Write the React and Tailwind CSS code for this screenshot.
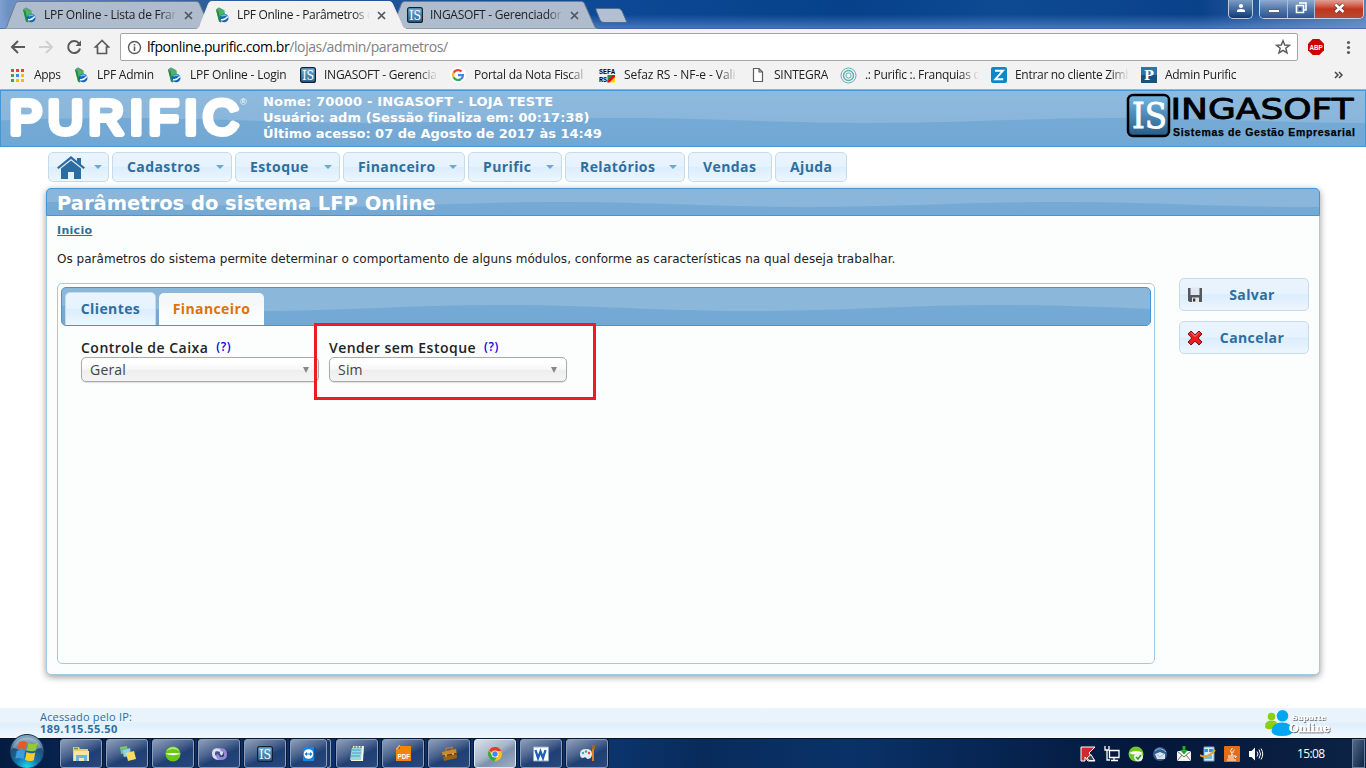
import React from "react";

const ui = "font-['Open_Sans','Noto_Sans',sans-serif]";
const verdana = "font-['DejaVu_Sans',sans-serif]";
const lucida = "font-['Open_Sans',sans-serif]";

/* Glossy wave used behind the blue bars */
function Wave({ peak, top, depth }) {
  let d = `M${peak - 1000} ${top}`;
  for (let x = peak - 1000; x < 1500; x += 500) {
    d += ` C${x + 90} ${top} ${x + 160} ${top + depth} ${x + 250} ${top + depth} S${x + 410} ${top} ${x + 500} ${top}`;
  }
  d += ` V100 H${peak - 1000}Z`;
  return (
    <svg className="absolute inset-0 h-full w-full" aria-hidden="true">
      <defs>
        <linearGradient id={`wave${peak}`} x1="0" y1="0" x2="0" y2="1">
          <stop offset="0" stopColor="#75aad5" />
          <stop offset="1" stopColor="#6ba3d1" />
        </linearGradient>
      </defs>
      <path d={d} fill={`url(#wave${peak})`} />
    </svg>
  );
}

function LpfIcon() {
  return (
    <svg width="16" height="16" viewBox="0 0 16 16" className="shrink-0">
      <path d="M2 2.500 5 0.500 10.500 3.500 11 8 7 15.500 5 14.500Z" fill="#4fb558" />
      <path d="M2 2.500 4.500 4 7 15.500 5 14.500Z" fill="#1f8a43" />
      <path d="M2 2.500 5 0.500 10.500 3.500 5 4Z" fill="#5f9d86" />
      <circle cx="10.200" cy="11" r="4.300" fill="#1466b4" />
      <path d="M7 12.500Q10.500 13.500 13.800 9.500" fill="none" stroke="#fff" strokeWidth="1.500" />
      <path d="M7.500 9Q10 7.500 12.500 8.500" fill="none" stroke="#5cc0ee" strokeWidth="1.600" />
    </svg>
  );
}

function IsIcon() {
  return (
    <svg width="16" height="16" viewBox="0 0 16 16" className="shrink-0">
      <defs>
        <linearGradient id="isg" x1="0" y1="0" x2="0" y2="1">
          <stop offset="0" stopColor="#6cb2dc" />
          <stop offset="1" stopColor="#2a618f" />
        </linearGradient>
      </defs>
      <rect x="0.6" y="0.6" width="14.8" height="14.8" rx="2" fill="url(#isg)" stroke="#14202b" strokeWidth="1.2" />
      <text x="2.2" y="12.6" fontSize="12.5" textLength="12" lengthAdjust="spacingAndGlyphs" fill="#fff" fontFamily="DejaVu Serif, serif">IS</text>
    </svg>
  );
}

function Tab({ active, icon, label, width, textClass }) {
  const w = width;
  return (
    <div className="relative -mr-[16px] h-[29px] shrink-0" style={{ width: w, zIndex: active ? 2 : 1 }}>
      <svg className="absolute inset-0" width={w} height="29">
        <path
          d={`M0 29 C3 28 3 26 4 23 L11 5 C12 2 13 1.5 16 1.5 H${w - 18} C${w - 15} 1.5 ${w - 14} 2 ${w - 13} 5 L${w - 5} 23 C${w - 3} 27 ${w - 3} 28.5 ${w} 29Z`}
          fill={active ? "#f2f2f2" : "#aebccd"}
          stroke={active ? "#f2f2f2" : "#6f7c90"}
          strokeWidth="1"
        />
      </svg>
      <div className="relative flex h-full items-center pl-[17px] pt-[1px]">
        {icon}
        <span className={`ml-[7px] block w-[133px] overflow-hidden whitespace-nowrap text-[12px] text-[#222] [mask-image:linear-gradient(to_right,black_88%,transparent)] ${textClass}`}>
          {label}
        </span>
        <svg width="9" height="9" viewBox="0 0 9 9" className="ml-[7px]">
          <path d="M1 1 8 8M8 1 1 8" stroke="#50565d" strokeWidth="1.7" />
        </svg>
      </div>
    </div>
  );
}

function TabStrip() {
  return (
    <div className="relative flex h-[29px] overflow-hidden bg-[linear-gradient(to_right,#7fa0cd_0px,#6d90c4_8px,#305f9e_200px,#0c4895_620px,#06418a_850px,#0d4a92_1000px,#0a428a_1200px,#5b80b6_1366px)] pl-[4px]">
      <div className="absolute inset-0 bg-[linear-gradient(to_bottom,transparent_50%,rgba(120,160,225,0.5)_95%,#3a5f99)]" />
      <Tab icon={<LpfIcon />} label="LPF Online - Lista de Fran" width={209} textClass="tracking-[-0.25px]" />
      <Tab active icon={<LpfIcon />} label="LPF Online - Parâmetros d" width={209} textClass="tracking-[-0.35px]" />
      <div className="flex w-[208px] shrink-0">
        <Tab icon={<IsIcon />} label="INGASOFT - Gerenciador" width={208} textClass="tracking-[-0.25px]" />
      </div>
      <svg width="36" height="18" className="relative mt-[7px] -ml-[5px] shrink-0">
        <path d="M3 1.5H25Q28 1.5 29 4L34 15.5H11Q8 15.5 7 13L3 3Z" fill="#b3c0d2" stroke="#4e6b97" />
      </svg>
      <div className="relative ml-auto flex shrink-0 gap-[6px] pr-[2px]">
        <div className="flex h-[19px] w-[25px] items-center justify-center rounded-b-[5px] border border-t-0 border-[#b7cbe6] bg-gradient-to-b from-[#7c9cc6] to-[#0b3a76] pb-[2px]">
          <svg width="10" height="10" viewBox="0 0 10 10">
            <circle cx="5" cy="3" r="2.1" fill="#fff" />
            <path d="M1 9V7.6Q1 6 5 6T9 7.6V9Z" fill="#fff" />
          </svg>
        </div>
        <div className="flex h-[19px] w-[105px] overflow-hidden rounded-b-[5px] border border-t-0 border-[#c2d2e8]">
          <div className="flex w-[28px] items-end justify-center border-r border-[#a8bedb] bg-gradient-to-b from-[#90abd0] via-[#5478ab] to-[#2b568f] pb-[5px]">
            <div className="h-[4px] w-[12px] border border-[#56657c] bg-white" />
          </div>
          <div className="flex w-[27px] items-center justify-center border-r border-[#a8bedb] bg-gradient-to-b from-[#90abd0] via-[#5478ab] to-[#2b568f] pb-[2px]">
            <svg width="12" height="12" viewBox="0 0 12 12">
              <path d="M4 1H11V8H9M1.500 3.500H8.500V10.500H1.500Z" fill="none" stroke="#fff" strokeWidth="1.600" />
              <path d="M4 6H6V8H4Z" fill="#33507c" />
            </svg>
          </div>
          <div className="flex flex-1 items-center justify-center bg-gradient-to-b from-[#e0a094] via-[#c2331d] to-[#b44a32] pb-[2px]">
            <svg width="13" height="11" viewBox="0 0 13 11">
              <path d="M2.5 1.5 10.5 9M10.5 1.5 2.5 9" stroke="#5a3a3a" strokeWidth="4" />
              <path d="M2.5 1.5 10.5 9M10.5 1.5 2.5 9" stroke="#fff" strokeWidth="2.6" />
            </svg>
          </div>
        </div>
      </div>
    </div>
  );
}

function Toolbar() {
  return (
    <div className="flex h-[33px] items-center bg-[#f2f2f2] pt-[3px]">
      <svg width="100" height="18" viewBox="0 0 100 18" className="ml-[10px] shrink-0" fill="none" stroke="#5a5a5a" strokeWidth="2">
        <path d="M15 9H2.5M8 3 2 9l6 6" />
        <path d="M29 9H41.500M36 3l6 6-6 6" stroke="#d0d0d0" />
        <path d="M69 5.500A6 6 0 1 0 70 10.500" />
        <path d="M71 2.500V8H65.500Z" fill="#5a5a5a" stroke="none" />
        <path d="M92 2.500 85.500 9H87.500V15.500H96.500V9H98.500Z" strokeWidth="1.7" />
      </svg>
      <div className="ml-[10px] flex h-[28px] w-[1178px] items-center rounded-[2px] border border-[#a6a6a6] bg-white px-[6px]">
        <svg width="15" height="15" viewBox="0 0 15 15" className="shrink-0">
          <circle cx="7.500" cy="7.500" r="6" fill="none" stroke="#5a5a5a" strokeWidth="1.4" />
          <path d="M7.500 6.500V11M7.500 4V5.500" stroke="#5a5a5a" strokeWidth="1.6" />
        </svg>
        <span className="ml-[5px] whitespace-nowrap pb-[1px] text-[14px] tracking-[-0.410px] text-black">
          lfponline.purific.com.br<span className="text-[#808080]">/lojas/admin/parametros/</span>
        </span>
        <svg width="16" height="16" viewBox="0 0 16 16" className="ml-auto">
          <path d="M8 1.700 9.700 6 14.400 6.300 10.800 9.300 12 13.900 8 11.300 4 13.900 5.200 9.300 1.600 6.300 6.300 6Z" fill="none" stroke="#5a5a5a" strokeWidth="1.400" />
        </svg>
      </div>
      <svg width="16" height="16" viewBox="0 0 16 16" className="ml-[10px]">
        <path d="M4.700 0H11.300L16 4.700V11.300L11.300 16H4.700L0 11.300V4.700Z" fill="#d00000" />
        <text x="1.400" y="10.700" fontSize="7.500" fontWeight="700" textLength="13.200" lengthAdjust="spacingAndGlyphs" fill="#fff" fontFamily="Liberation Sans, sans-serif">ABP</text>
      </svg>
      <svg width="5" height="15" viewBox="0 0 5 15" className="ml-[22px]" fill="#5a5a5a">
        <circle cx="2.500" cy="2.500" r="1.600" />
        <circle cx="2.500" cy="7.500" r="1.600" />
        <circle cx="2.500" cy="12.500" r="1.600" />
      </svg>
    </div>
  );
}

const icons = {
  apps: (
    <svg width="15" height="15" viewBox="0 0 15 15" className="shrink-0">
      <path d="M1 1h3v3H1ZM6 1h3v3H6ZM11 1h3v3h-3Z" fill="#ea4335" />
      <path d="M1 6h3v3H1Z" fill="#34a853" />
      <path d="M6 6h3v3H6Z" fill="#4285f4" />
      <path d="M11 6h3v3h-3Z" fill="#fbbc05" />
      <path d="M1 11h3v3H1Z" fill="#34a853" />
      <path d="M6 11h3v3H6ZM11 11h3v3h-3Z" fill="#fbbc05" />
    </svg>
  ),
  google: (
    <svg width="16" height="16" viewBox="0 0 16 16" className="shrink-0">
      <circle cx="8" cy="8" r="8" fill="#fff" />
      <g fill="none" strokeWidth="2.200">
        <path d="M3.600 5.700A5 5 0 0 1 11.500 4.500" stroke="#ea4335" />
        <path d="M3.600 5.700A5 5 0 0 0 3.600 10.300" stroke="#fbbc05" />
        <path d="M3.600 10.300A5 5 0 0 0 11 12" stroke="#34a853" />
        <path d="M11 12Q13 10.500 13 8.200H8" stroke="#4285f4" />
      </g>
    </svg>
  ),
  sefa: (
    <svg width="17" height="16" viewBox="0 0 17 16" className="shrink-0" fontFamily="Liberation Mono, monospace" fontWeight="700" fontSize="8">
      <text x="0" y="6.500" textLength="16" lengthAdjust="spacingAndGlyphs">SEFA</text>
      <text x="0" y="14.700" textLength="8" lengthAdjust="spacingAndGlyphs">RS</text>
      <path d="M8.500 8V15.500L16 8Z" fill="#16934a" />
      <path d="M16 15.500H8.500L16 8Z" fill="#ffd800" />
      <path d="M8.500 13.500 14 8H16V10L10.500 15.500H8.500Z" fill="#e01010" />
    </svg>
  ),
  page: (
    <svg width="16" height="16" viewBox="0 0 16 16" className="shrink-0">
      <path d="M3.500 1.500H9L12.500 5V14.500H3.500ZM9 1.500V5H12.500" fill="#fff" stroke="#5c5c5c" strokeWidth="1.200" />
    </svg>
  ),
  rings: (
    <svg width="17" height="17" viewBox="0 0 17 17" className="shrink-0" fill="none" stroke="#5cb3b4">
      <circle cx="8.500" cy="8.500" r="7.500" />
      <circle cx="8.500" cy="8.500" r="5" strokeWidth="1.400" />
      <circle cx="8.500" cy="8.500" r="2.600" />
    </svg>
  ),
  zimbra: (
    <svg width="16" height="16" viewBox="0 0 16 16" className="shrink-0">
      <rect width="16" height="16" rx="2" fill="#0a88c8" />
      <path d="M4 3.800H11.800L4.400 12.200H12.200" fill="none" stroke="#fff" strokeWidth="2" />
    </svg>
  ),
  purific: (
    <svg width="16" height="16" viewBox="0 0 16 16" className="shrink-0">
      <rect width="16" height="16" fill="#1b5079" />
      <path d="M0 0H16V8H0Z" fill="#2b76a8" />
      <text x="3" y="13" fontSize="13" fontWeight="700" fill="#fff" fontFamily="DejaVu Serif, serif">P</text>
    </svg>
  ),
};

const bookmarks = [
  ["w-[63px]", icons.apps, "Apps", "tracking-[-0.3px]"],
  ["w-[93px]", <LpfIcon />, "LPF Admin", "tracking-[-0.25px]"],
  ["w-[134px]", <LpfIcon />, "LPF Online - Login", "tracking-[-0.2px]"],
  ["w-[150px]", <IsIcon />, "INGASOFT - Gerencia", "tracking-[-0.25px]"],
  ["w-[149px]", icons.google, "Portal da Nota Fiscal", "tracking-[-0.25px]"],
  ["w-[151px]", icons.sefa, "Sefaz RS - NF-e - Vali", "tracking-[-0.05px]"],
  ["w-[90px]", icons.page, "SINTEGRA", "tracking-[-0.25px]"],
  ["w-[151px]", icons.rings, ".: Purific :. Franquias d", "tracking-[-0.3px]"],
  ["w-[150px]", icons.zimbra, "Entrar no cliente Zimb", "tracking-[-0.3px]"],
  ["w-[120px]", icons.purific, "Admin Purific", "tracking-[-0.28px]"],
];

function Bookmarks() {
  return (
    <div className="flex h-[28px] items-center border-b border-[#b0b0b0] bg-[#f2f2f2] pb-[1px] pl-[10px] text-[12px] text-[#222]">
      {bookmarks.map(([w, icon, label, tr], i) => (
        <div key={label} className={`flex shrink-0 items-center ${w}`}>
          {icon}
          <span
            className={`max-w-[114px] overflow-hidden whitespace-nowrap ${i === 0 ? "ml-[9px]" : "ml-[8px]"} [mask-image:linear-gradient(to_right,black_95px,transparent_114px)] ${tr}`}
          >
            {label}
          </span>
        </div>
      ))}
      <svg width="9" height="8" viewBox="0 0 9 8" className="ml-auto mr-[23px]" fill="none" stroke="#444" strokeWidth="1.500">
        <path d="M1 1 4 4 1 7M5 1 8 4 5 7" />
      </svg>
    </div>
  );
}

function SiteHeader() {
  return (
    <div className={`relative flex h-[57px] justify-between border border-[#4297d7] bg-gradient-to-b from-[#8fbade] to-[#84b2d7] ${verdana}`}>
      <Wave peak={120} top={27} depth={5} />
      <div className="relative flex">
        <svg width="262" height="55" viewBox="0 0 262 55">
          <text x="8.500" y="42.500" fontSize="49" textLength="229" lengthAdjust="spacing" fill="#fff" stroke="#fff" strokeWidth="6" strokeLinejoin="round" fontFamily="Liberation Sans, sans-serif">PURIFIC</text>
          <text x="239" y="13.500" fontSize="9" fill="#fff" fontFamily="Liberation Sans, sans-serif">®</text>
        </svg>
        <div className="pt-[3px] text-[13px] font-bold leading-[16px] text-white">
          <p className="tracking-[0.190px]">Nome: 70000 - INGASOFT - LOJA TESTE</p>
          <p className="tracking-[0.050px]">Usuário: adm (Sessão finaliza em: 00:17:38)</p>
          <p>Último acesso: 07 de Agosto de 2017 às 14:49</p>
        </div>
      </div>
      <svg width="230" height="50" viewBox="0 0 230 50" className="relative mr-[9px]">
        <defs>
          <linearGradient id="ilogo" x1="0" y1="0" x2="0" y2="1">
            <stop offset="0" stopColor="#74b7e3" />
            <stop offset="1" stopColor="#245c86" />
          </linearGradient>
        </defs>
        <rect x="2" y="4" width="41" height="41" rx="5" fill="url(#ilogo)" stroke="#000" strokeWidth="2.500" />
        <text x="6" y="37" fontSize="35" textLength="35" lengthAdjust="spacingAndGlyphs" fill="#fff" stroke="#fff" strokeWidth="0.900" fontFamily="DejaVu Serif, serif">IS</text>
        <text x="44.500" y="27.500" fontSize="29" textLength="183" lengthAdjust="spacingAndGlyphs" stroke="#000" strokeWidth="0.900" strokeLinejoin="round" fontFamily="DejaVu Sans, sans-serif">INGASOFT</text>
        <text x="47" y="45" fontSize="10.500" fontWeight="700" textLength="182" lengthAdjust="spacing" stroke="#000" strokeWidth="0.250" fontFamily="Liberation Sans, sans-serif">Sistemas de Gestão Empresarial</text>
      </svg>
    </div>
  );
}

const glass = "border border-[#c5dbec] bg-[linear-gradient(to_bottom,#e9f4fe_0%,#e6f2fd_48%,#dbedfc_52%,#edf6fe_100%)]";

const menu = [
  ["w-[120px]", "Cadastros", true],
  ["w-[105px]", "Estoque", true],
  ["w-[122px]", "Financeiro", true],
  ["w-[94px]", "Purific", true],
  ["w-[120px]", "Relatórios", true],
  ["w-[84px]", "Vendas", false],
  ["w-[72px]", "Ajuda", false],
];

const Caret = () => <span className="ml-auto border-x-[4px] border-t-[4px] border-x-transparent border-t-[#6da8d5]" />;

function Menu() {
  return (
    <div className="flex h-[41px] gap-[3px] pl-[48px] pt-[5px]">
      <div className={`flex h-[30px] w-[61px] items-center rounded-[5px] pl-[8px] pr-[6px] ${glass}`}>
        <svg width="28" height="23" viewBox="0 0 28 23" fill="#2c6da1">
          <path d="M0 11.500 14 0 20 5V2H24V8.300L28 11.500 26.500 13 14 3 1.500 13Z" />
          <path d="M4 12.500 14 4.500 24 12.500V23H17V16H11V23H4Z" />
        </svg>
        <Caret />
      </div>
      {menu.map(([w, label, drop]) => (
        <div key={label} className={`flex h-[30px] items-center rounded-[5px] pl-[14px] pr-[7px] ${w} ${glass} ${lucida}`}>
          <span className="pb-[2px] text-[14px] font-bold tracking-[0.400px] text-[#2e6e9e]">{label}</span>
          {drop && <Caret />}
        </div>
      ))}
    </div>
  );
}

function Field({ label, value }) {
  return (
    <div className="w-[238px]">
      <div className="flex h-[18px] items-center pb-[2px]">
        <span className={`whitespace-nowrap text-[14px] font-semibold tracking-[0.480px] text-[#222] ${lucida}`}>{label}</span>
        <span className={`ml-[8px] text-[12px] font-semibold tracking-[0.600px] text-[#0000f0] ${lucida}`}>(?)</span>
      </div>
      <div className="flex h-[25px] items-center rounded-[5px] border border-[#aaa] bg-[linear-gradient(to_bottom,#fff_20%,#f6f6f6_50%,#eee_52%,#f4f4f4_100%)] pl-[8px] pr-[9px] shadow-[0_1px_1px_rgba(0,0,0,0.12)]">
        <span className={`text-[14px] tracking-[0.200px] text-[#444] ${lucida}`}>{value}</span>
        <span className="ml-auto border-x-[3.500px] border-t-[6px] border-x-transparent border-t-[#888]" />
      </div>
    </div>
  );
}

function SideButton({ icon, label }) {
  return (
    <button className={`flex h-[33px] w-[130px] items-center rounded-[5px] pl-[7px] ${glass}`}>
      {icon}
      <span className={`flex-1 pr-[7px] text-center text-[14px] font-bold tracking-[0.400px] text-[#2e6e9e] ${lucida}`}>{label}</span>
    </button>
  );
}

function Panel() {
  return (
    <div className="mx-[46px] h-[487px] w-[1274px] overflow-visible rounded-[5px] border border-[#a6c9e2] bg-[#fcfefd] shadow-[0_2px_7px_rgba(0,0,0,0.4)]">
      <div className="relative -m-px flex h-[28px] items-center overflow-hidden rounded-t-[5px] border border-[#4297d7] bg-[#89b6da] pl-[10px] pt-[3px]">
        <Wave peak={514} top={13} depth={5} />
        <h1 className={`relative whitespace-nowrap text-[19.500px] font-bold text-white ${verdana}`}>Parâmetros do sistema LFP Online</h1>
      </div>
      <div className={`pl-[10px] pt-[8px] text-[#222] ${verdana}`}>
        <a className="block text-[11px] font-bold leading-[16px] tracking-[0.300px] text-[#2e6e9e] underline">Inicio</a>
        <p className="mt-[11px] whitespace-nowrap text-[12px] leading-[18px] tracking-[0.025px]">
          Os parâmetros do sistema permite determinar o comportamento de alguns módulos, conforme as características na qual deseja trabalhar.
        </p>
      </div>
      <div className="flex items-start justify-between pl-[10px] pr-[10px] pt-[10px]">
        <div className="mt-[5px] h-[381px] w-[1098px] rounded-[5px] border border-[#a6c9e2] p-[3px]">
          <div className="relative h-[39px] overflow-hidden rounded-[5px] border border-[#4297d7] bg-[#8bb7da]">
            <Wave peak={439} top={17} depth={6} />
            <div className={`relative flex gap-[3px] pl-[3px] pt-[4px] text-[14px] font-bold tracking-[0.400px] ${lucida}`}>
              <div className={`flex h-[34px] w-[91px] items-center justify-center rounded-t-[5px] pb-[2px] ${glass} text-[#2e6e9e]`}>Clientes</div>
              <div className="mt-px flex h-[34px] w-[105px] items-center justify-center rounded-t-[5px] bg-[linear-gradient(to_bottom,#f5f8f9_30%,#fcfefd_70%)] pb-[4px] text-[#e17009]">Financeiro</div>
            </div>
          </div>
          <div className="relative flex gap-[10px] pl-[20px] pt-[13px]">
            <Field label="Controle de Caixa" value="Geral" />
            <Field label="Vender sem Estoque" value="Sim" />
            <div className="absolute left-[253px] top-[-3px] h-[77px] w-[282px] border-[3px] border-[#ed1c24]" />
          </div>
        </div>
        <div className="flex flex-col gap-[10px]">
          <SideButton
            label="Salvar"
            icon={
              <svg width="16" height="16" viewBox="0 0 16 16">
                <path d="M1 1H15V15H2.500L1 13.500Z" fill="#55585c" />
                <path d="M3.500 0.500H12.500V8H3.500Z" fill="#dfe9ef" />
                <path d="M5 10.500H12V15H5Z" fill="#e5e5e5" />
                <path d="M6 11.500H8.300V14.500H6Z" fill="#333" />
              </svg>
            }
          />
          <SideButton
            label="Cancelar"
            icon={
              <svg width="16" height="16" viewBox="0 0 16 16">
                <path d="M4 1 8 4.800 12 1 15 4 11.200 8 15 12 12 15 8 11.200 4 15 1 12 4.800 8 1 4Z" fill="#ee1c1c" stroke="#6b1717" strokeLinejoin="round" />
                <path d="M4 2.500 8 6.500 12 2.500" fill="none" stroke="#ff8a80" />
              </svg>
            }
          />
        </div>
      </div>
    </div>
  );
}

function Footer() {
  return (
    <div className="mt-auto flex h-[30px] justify-between bg-[linear-gradient(to_bottom,#e9f4fd_0%,#e8f3fc_48%,#dfeffb_50%,#f0f7fe_100%)] pl-[40px] pr-[34px]">
      <div className={`pt-[3px] text-[11px] leading-[12px] text-[#2e6e9e] ${lucida}`}>
        <p className="tracking-[0.180px]">Acessado pelo IP:</p>
        <p className="font-bold tracking-[0.420px]">189.115.55.50</p>
      </div>
      <svg width="68" height="30" viewBox="0 0 68 30" fontFamily="DejaVu Serif, serif" fontWeight="700">
        <defs>
          <filter id="ts" x="-10%" y="-10%" width="130%" height="140%">
            <feDropShadow dx="0.800" dy="1" stdDeviation="0.500" floodColor="#555" floodOpacity="0.900" />
          </filter>
        </defs>
        <circle cx="7.500" cy="8.500" r="3.800" fill="#8ccf0a" />
        <path d="M1 18Q1 12.500 8 12.500Q12 12.500 13 15L8 21Q1 22 1 18Z" fill="#8ccf0a" />
        <circle cx="18.500" cy="7.800" r="5.800" fill="#00a7f0" />
        <path d="M7.500 23Q8 14.500 18 14.500T29 23Q28 28 18 28T7.500 23Z" fill="#00a7f0" />
        <g fill="#fff" filter="url(#ts)">
          <text x="28" y="12" fontSize="8" textLength="34" lengthAdjust="spacingAndGlyphs">Suporte</text>
          <text x="25" y="23.500" fontSize="10.500" textLength="41" lengthAdjust="spacingAndGlyphs" stroke="#fff" strokeWidth="0.400">Online</text>
        </g>
      </svg>
    </div>
  );
}

const taskIcons = [
  <svg width="18" height="16" viewBox="0 0 18 16"><path d="M1 1H7L8 3H16V15H1Z" fill="#eacb71" /><path d="M2 5H17V15H2Z" fill="#f7e7a6" /><path d="M4 9H15V15H12V12H7V15H4Z" fill="#68b6e4" /><path d="M2 2.500H6" stroke="#4aa83c" strokeWidth="1.500" /></svg>,
  <svg width="17" height="17" viewBox="0 0 17 17"><path d="M1 2 8 1 9 8 2 9Z" fill="#79c56c" /><path d="M3 5 11 3 12 11 5 12Z" fill="#8fd3f0" stroke="#5298c6" strokeWidth=".5" /><path d="M7 8 15 6 17 14 9 16Z" fill="#f8dc60" /></svg>,
  <svg width="16" height="16" viewBox="0 0 16 16"><circle cx="8" cy="8" r="7.500" fill="#6ac812" /><path d="M1.500 5A7.500 7.500 0 0 1 14.500 5Q8 1 1.500 5Z" fill="#b5ee6c" /><path d="M0 7.800Q8 6 16 7.800 8 10.500 0 7.800Z" fill="#fff" /></svg>,
  <svg width="17" height="16" viewBox="0 0 17 16" fill="none" strokeWidth="3"><path d="M8 12.500Q2 12 2.500 7T10 4.500Q11.500 7 9.500 8.500" stroke="#dcdcf2" /><path d="M9.500 4Q14 3 14.500 8T9 12.500Q6 11.500 7 8.500" stroke="#9a86d8" /></svg>,
  <IsIcon />,
  <svg width="16" height="16" viewBox="0 0 16 16"><path d="M2 1H13V15H2Z" fill="#1686e4" /><path d="M13 1 15 3V13L13 15Z" fill="#0a4fa1" /><circle cx="7.500" cy="8" r="4.800" fill="#fff" /><path d="M3.500 8 6 6V7.400H9V6L11.500 8 9 10V8.600H6V10Z" fill="#1272cc" /></svg>,
  <svg width="16" height="17" viewBox="0 0 16 17"><path d="M4 1H15L14 16H2Z" fill="#f6f4db" /><path d="M3 2H13L12 15H1Z" fill="#9bd6e5" /><path d="M3 5H12M3 8H12M2 11H11" stroke="#4aa2bb" /><path d="M3 1V3M6 1V3M9 1V3M12 1V3" stroke="#555" /></svg>,
  <svg width="17" height="17" viewBox="0 0 17 17"><path d="M1 4H5V1H16V16H1Z" fill="#f58400" /><path d="M1 4Q3 4 4.500 0" stroke="#ffac3b" fill="none" strokeWidth="1.500" /><text x="2.500" y="13.500" fontSize="7.500" textLength="12.500" lengthAdjust="spacingAndGlyphs" fontWeight="700" fill="#fff" fontFamily="Liberation Sans, sans-serif">PDF</text></svg>,
  <svg width="17" height="16" viewBox="0 0 17 16"><path d="M1 6 15 3 16 12 3 15Z" fill="#9a611a" /><path d="M1 6 15 3 15.500 7.500 2 10Z" fill="#c98a2c" /><path d="M5 5V2.500L11 1.200V4" fill="none" stroke="#b07a2a" strokeWidth="1.500" /><path d="M2 10 15.500 7.500" stroke="#4e2f07" /><path d="M5 8.500V10.500M12 7V9" stroke="#f0d070" strokeWidth="1.300" /></svg>,
  <svg width="16" height="16" viewBox="0 0 16 16"><circle cx="8" cy="8" r="7" fill="#fbc116" /><path d="M8 8 2 4.500A7 7 0 0 1 14.300 5H8Z" fill="#e33b2e" /><path d="M1.900 4.600A7 7 0 0 0 7.500 15L10.500 9.500 8 8 5 9.500Z" fill="#2da94f" /><circle cx="8" cy="8" r="3.500" fill="#fff" /><circle cx="8" cy="8" r="2.700" fill="#4285f4" /></svg>,
  <svg width="16" height="16" viewBox="0 0 16 16"><path d="M0.500 1H15.500V15H0.500Z" fill="#fff" stroke="#8da9cc" /><path d="M2.500 4 5 12 7.500 5.500 10 12 12.500 4" stroke="#2060b4" fill="none" strokeWidth="2.300" /></svg>,
  <svg width="17" height="17" viewBox="0 0 17 17"><path d="M1 9Q1 4 7 4T13 9 8 14Q7 11 4 13Q1 13 1 9Z" fill="#e4edf2" /><circle cx="4" cy="8" r="1.200" fill="#34a4d6" /><circle cx="7" cy="6.500" r="1.200" fill="#43b549" /><circle cx="10" cy="8" r="1.200" fill="#e74337" /><path d="M14 4V16" stroke="#e07a1b" strokeWidth="2" /><path d="M13 0H16V4H13Z" fill="#9c672d" /></svg>,
];

const trayIcons = [
  <svg width="16" height="16" viewBox="0 0 16 16"><path d="M1 1H15L9 7 15 15H8L5 11V15H1Z" fill="#d3282c" stroke="#fff" /><path d="M7 12 11 8.500 14.500 14.500H9Z" fill="#3a4b51" stroke="#fff" /></svg>,
  <svg width="16" height="16" viewBox="0 0 16 16" fill="none" stroke="#fff" strokeWidth="1.300"><path d="M5.500 4.500H15V11.500H5.500ZM10 12V14.500M7 14.500H14M1 0V4H5V0M3 4V14H6" /></svg>,
  <svg width="16" height="16" viewBox="0 0 16 16"><circle cx="8" cy="8" r="7.500" fill="#70c928" /><path d="M1 7Q8 3 15 7 8 10 1 7Z" fill="#fff" /><circle cx="10.500" cy="11" r="4.500" fill="#eef4e4" /><path d="M8 11 10 13 13 9" fill="none" stroke="#399831" strokeWidth="1.600" /></svg>,
  <svg width="16" height="16" viewBox="0 0 16 16"><circle cx="8" cy="8" r="7" fill="#325d8e" /><path d="M3 8 8 6 13 8V13H5Z" fill="#dbe3e9" /><path d="M5 9 8 11 12 8M3 5Q8 0 14 6" fill="none" stroke="#93bad7" /></svg>,
  <svg width="16" height="16" viewBox="0 0 16 16"><path d="M1 5H15V15H1Z" fill="#f4f4ec" /><path d="M1 5 8 11 15 5M1 15 6 9M15 15 10 9" fill="none" stroke="#777" /><path d="M6.500 0H9.500V4H12L8 8.500 4 4H6.500Z" fill="#25a82c" /></svg>,
  <svg width="16" height="16" viewBox="0 0 16 16"><path d="M4 1H14V15H4Z" fill="#daedf7" stroke="#7ba3c2" /><path d="M4.500 3H8V6H4.500ZM9 3H13V6H9Z" fill="#3993d8" /><path d="M5 9H12V13H5Z" fill="#74bbe8" /><path d="M0 9Q6 14 15 4" fill="none" stroke="#e5a52b" strokeWidth="2" /></svg>,
  <svg width="16" height="16" viewBox="0 0 16 16"><rect width="16" height="16" rx="1" fill="#e46d18" /><path d="M8.500 2Q5 5 7.500 7T7 9M10.500 4Q8 5.500 9 7" fill="none" stroke="#fff" /><path d="M4 10H11Q14 10 11 12M4 12H10M3 14H12" fill="none" stroke="#fff" /></svg>,
  <svg width="16" height="16" viewBox="0 0 16 16"><path d="M1 5H3.500L7 1.500V14.500L3.500 11H1Z" fill="#fff" /><path d="M9 5.500Q11 8 9 10.500M11 3.500Q14 8 11 12.500M13 2.500Q16.500 8 13 13.500" fill="none" stroke="#fff" /></svg>,
];

function Taskbar() {
  return (
    <div className="flex h-[30px] shrink-0 items-start border-t border-[#06101f] bg-[linear-gradient(to_right,#041c42_0px,#0a2f66_180px,#0b346c_620px,#082b5b_700px,#0a3268_850px,#03173a_1150px,#0c2345_1366px)] pl-[8px]">
      <svg width="38" height="36" viewBox="0 0 38 36" className="-mt-[6px] mr-[14px] h-[35px] shrink-0">
        <defs>
          <radialGradient id="orb" cx="50%" cy="95%" r="85%">
            <stop offset="0" stopColor="#29d3f5" />
            <stop offset="0.400" stopColor="#1272a8" />
            <stop offset="0.750" stopColor="#234f78" />
            <stop offset="1" stopColor="#7f9fb8" />
          </radialGradient>
        </defs>
        <circle cx="19" cy="19" r="17.500" fill="url(#orb)" stroke="#122e4a" />
        <path d="M4 15A16 16 0 0 1 34 15Q19 22 4 15Z" fill="#fff" opacity="0.300" />
        <path d="M11 9Q15 7 19 9.500L17.500 17Q13 15 9 17Z" fill="#e8592a" />
        <path d="M20.500 10Q25 12.500 30 10L28 18Q23 20 18.800 17.500Z" fill="#93c83e" />
        <path d="M8.500 18.500Q13 16.500 17 18.700L15.500 27Q11 24.500 7 26.500Z" fill="#3e9be0" />
        <path d="M18.500 19.500Q23 22 27.500 20L26 28Q21 30 17 27.500Z" fill="#fcc92f" />
      </svg>
      <div className="flex gap-[4px]">
        {taskIcons.map((icon, i) => (
          <div key={i} className="flex">
            <div
              className={`flex h-[29px] items-center justify-center rounded-[3px] border shadow-[0_0_0_1px_#061a38] ${i === 5 ? "w-[37px]" : "w-[42px]"} ${
                i === 9
                  ? "border-[#dfe7ef] bg-[linear-gradient(150deg,#d9e0e8_0%,#a8b6c8_45%,#7d91ac_60%,#9fb0c6_100%)]"
                  : "border-[#8b9dba] bg-[linear-gradient(155deg,#8e9fba_0%,#4c648f_40%,#203f73_60%,#28487e_100%)]"
              }`}
            >
              {icon}
            </div>
            {i === 5 && <div className="mr-px h-[29px] w-[4px] rounded-r-[3px] border border-l-0 border-[#8b9dba] bg-[#1c3766]" />}
          </div>
        ))}
      </div>
      <div className="ml-auto flex gap-[8px] pt-[7px]">
        {trayIcons.map((icon, i) => (
          <div key={i}>{icon}</div>
        ))}
      </div>
      <span className="ml-[33px] w-[28px] pt-[6px] text-[12px] leading-[18px] tracking-[-0.600px] text-white">15:08</span>
      <div className="ml-[27px] mr-px h-[29px] w-[13px] border border-[#6d7f98] bg-gradient-to-br from-[#536985] to-[#0d2344]" />
    </div>
  );
}

export default function App() {
  return (
    <div className={`flex h-[768px] w-[1366px] flex-col overflow-hidden bg-white ${ui}`}>
      <TabStrip />
      <Toolbar />
      <Bookmarks />
      <SiteHeader />
      <Menu />
      <Panel />
      <Footer />
      <Taskbar />
    </div>
  );
}
